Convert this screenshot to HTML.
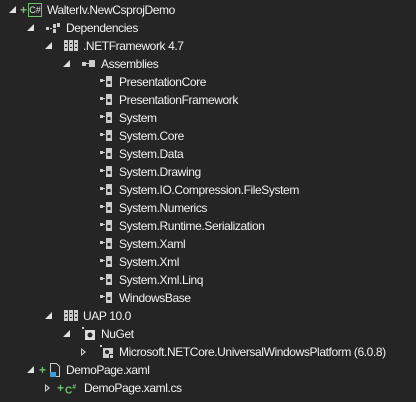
<!DOCTYPE html><html><head><style>
body{margin:0;width:416px;height:402px;background:#252526;overflow:hidden;font-family:"Liberation Sans",sans-serif;font-size:12px;color:#f1f1f1}
.r{position:absolute;height:18px;line-height:18px;white-space:nowrap;margin-top:1px}
.a{position:absolute;top:5px;width:0;height:0;border-left:7px solid transparent;border-bottom:7px solid #e0e0e0;margin-left:1px}
.c{position:absolute;top:5px;width:0;height:0;border-top:4px solid transparent;border-bottom:4px solid transparent;border-left:5px solid #cfcfcf}
.c:after{content:"";position:absolute;left:-4px;top:-2px;border-top:2px solid transparent;border-bottom:2px solid transparent;border-left:2px solid #252526}
svg{position:absolute;top:1px}
.t{position:absolute;top:0;letter-spacing:-0.4px}
.g{color:#6fc36f;position:absolute;top:0;font-weight:bold}
</style></head><body>
<div class="r" style="top:0;left:0;width:416px">
<div class="a" style="left:8px"></div><span class="g" style="left:20px">+</span>
<div style="position:absolute;left:28px;top:2px;width:12px;height:12px;border:1px solid #6fc36f;font-size:9px;line-height:12px;text-align:center;color:#e0e0e0">C#</div>
<span class="t" style="left:47px">WalterIv.NewCsprojDemo</span></div>
<div class="r" style="top:18px;left:0"><div class="a" style="left:26px"></div>
<svg style="left:45px" width="16" height="16"><rect x="1" y="7" width="3" height="3" fill="#ccc"/><rect x="5" y="8" width="2" height="1" fill="#ccc"/><rect x="8" y="4" width="3" height="4" fill="#ccc"/><rect x="12" y="3" width="3" height="4" fill="#ccc"/><rect x="8" y="9" width="3" height="4" fill="#ccc"/></svg>
<span class="t" style="left:66px">Dependencies</span></div>
<div class="r" style="top:36px;left:0"><div class="a" style="left:44px"></div>
<svg style="left:63px" width="16" height="16"><g fill="#ccc"><rect x="1" y="2" width="4" height="11"/><rect x="6" y="2" width="4" height="11"/><rect x="11" y="2" width="4" height="11"/></g><g fill="#252526"><rect x="2" y="5" width="2" height="1"/><rect x="7" y="5" width="2" height="1"/><rect x="12" y="5" width="2" height="1"/><rect x="2" y="9" width="2" height="1"/><rect x="7" y="9" width="2" height="1"/><rect x="12" y="9" width="2" height="1"/></g></svg>
<span class="t" style="left:83px">.NETFramework 4.7</span></div>
<div class="r" style="top:54px;left:0"><div class="a" style="left:62px"></div>
<svg style="left:81px" width="16" height="16"><rect x="1" y="6" width="4" height="4" fill="#ccc"/><rect x="5" y="7" width="3" height="1" fill="#ccc"/><rect x="8" y="4" width="6" height="7" fill="#ccc"/></svg>
<span class="t" style="left:101px">Assemblies</span></div>
<div id="asm"></div>
<div class="r" style="top:306px;left:0"><div class="a" style="left:44px"></div>
<svg style="left:63px" width="16" height="16"><g fill="#ccc"><rect x="1" y="2" width="4" height="11"/><rect x="6" y="2" width="4" height="11"/><rect x="11" y="2" width="4" height="11"/></g><g fill="#252526"><rect x="2" y="5" width="2" height="1"/><rect x="7" y="5" width="2" height="1"/><rect x="12" y="5" width="2" height="1"/><rect x="2" y="9" width="2" height="1"/><rect x="7" y="9" width="2" height="1"/><rect x="12" y="9" width="2" height="1"/></g></svg>
<span class="t" style="left:83px">UAP 10.0</span></div>
<div class="r" style="top:324px;left:0"><div class="a" style="left:62px"></div>
<svg style="left:81px" width="16" height="16"><rect x="1" y="1" width="2" height="2" fill="#ccc"/><rect x="4" y="4" width="10" height="10" fill="#ddd"/><circle cx="9" cy="9" r="2.5" fill="#252526"/></svg>
<span class="t" style="left:101px">NuGet</span></div>
<div class="r" style="top:342px;left:0"><div class="c" style="left:81px"></div>
<svg style="left:99px" width="16" height="16"><rect x="1" y="1" width="2" height="2" fill="#ccc"/><rect x="4" y="4" width="10" height="10" fill="#ccc"/><circle cx="8" cy="8" r="2" fill="#252526"/><rect x="10" y="10" width="4" height="4" fill="#252526"/><rect x="11" y="11" width="3" height="3" fill="#ccc"/></svg>
<span class="t" style="left:119px">Microsoft.NETCore.UniversalWindowsPlatform (6.0.8)</span></div>
<div class="r" style="top:360px;left:0"><div class="a" style="left:26px"></div><span class="g" style="left:39px">+</span>
<svg style="left:46px" width="16" height="16"><path d="M4.5 1.5h6l3 3v10h-9z" fill="none" stroke="#ccc"/><rect x="4" y="10" width="6" height="5" fill="#3a9fe0"/></svg>
<span class="t" style="left:66px">DemoPage.xaml</span></div>
<div class="r" style="top:378px;left:0"><div class="c" style="left:45px"></div><span class="g" style="left:57px">+</span>
<span class="g" style="left:65px;font-size:10px">C<sup style="font-size:7px">#</sup></span>
<span class="t" style="left:84px">DemoPage.xaml.cs</span></div>
<script>
var n=["PresentationCore","PresentationFramework","System","System.Core","System.Data","System.Drawing","System.IO.Compression.FileSystem","System.Numerics","System.Runtime.Serialization","System.Xaml","System.Xml","System.Xml.Linq","WindowsBase"],h="";
n.forEach(function(s,i){h+='<div class="r" style="top:'+(72+18*i)+'px;left:0"><svg style="left:99px" width="16" height="16"><rect x="1" y="5" width="3" height="3" fill="#ccc"/><rect x="4" y="6" width="2" height="1" fill="#ccc"/><rect x="7" y="2" width="6" height="11" fill="#ccc"/><rect x="8.5" y="7" width="3" height="3" fill="#252526"/></svg><span class="t" style="left:119px">'+s+'</span></div>'});
document.getElementById("asm").outerHTML=h;
</script>
</body></html>
